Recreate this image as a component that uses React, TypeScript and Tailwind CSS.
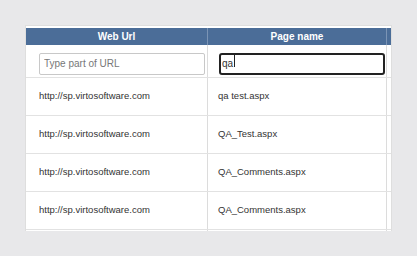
import React, { useState } from 'react';

const rows = [
  { url: 'http://sp.virtosoftware.com', page: 'qa test.aspx' },
  { url: 'http://sp.virtosoftware.com', page: 'QA_Test.aspx' },
  { url: 'http://sp.virtosoftware.com', page: 'QA_Comments.aspx' },
  { url: 'http://sp.virtosoftware.com', page: 'QA_Comments.aspx' },
];

export default function App() {
  const [urlFilter, setUrlFilter] = useState('');
  const [pageFilter, setPageFilter] = useState('qa');

  return (
    <div className="w-[417px] h-[256px] bg-[#e8e8ea] pt-[25px] pl-[25px] font-['Liberation_Sans',Arial,sans-serif] overflow-hidden">
      <div className="w-[367px] h-[206px] bg-white border-l border-r border-t border-[#dedede] pt-[2px] overflow-hidden">
        {/* Header */}
        <div className="flex h-[17px] bg-[#4b6d98] text-white text-[10px] font-bold">
          <div className="w-[182px] flex items-center justify-center border-r border-[#7b94b5]">Web Url</div>
          <div className="w-[179px] flex items-center justify-center border-r border-[#7b94b5]">Page name</div>
          <div className="flex-1" />
        </div>

        {/* Filters */}
        <div className="flex h-[33px] border-b border-[#e2e2e2]">
          <div className="w-[182px] pl-[13px] pt-[5px] border-r border-[#dcdcdc]">
            <input
              type="text"
              value={urlFilter}
              onChange={(e) => setUrlFilter(e.target.value)}
              placeholder="Type part of URL"
              className="w-[166px] h-[22px] px-[4px] text-[10px] text-[#333] placeholder-[#777] border border-[#c8c8c8] rounded-[2px] outline-none"
            />
          </div>
          <div className="w-[179px] pl-[11px] pt-[5px] border-r border-[#dcdcdc]">
            <div className="relative w-[166px] h-[22px]">
              <input
                type="text"
                value={pageFilter}
                onChange={(e) => setPageFilter(e.target.value)}
                className="w-full h-full px-[1px] text-[10px] text-[#333] caret-transparent border-2 border-[#222] rounded-[3px] outline-none"
              />
              {/* caret */}
              <span className="absolute left-[15px] top-[5px] w-[1px] h-[12px] bg-[#222]" />
            </div>
          </div>
          <div className="flex-1" />
        </div>

        {/* Rows */}
        {rows.map((r, i) => (
          <div key={i} className="flex h-[38px] border-b border-[#e2e2e2] text-[9.5px] text-[#333]">
            <div className="w-[182px] pl-[13px] flex items-center border-r border-[#dcdcdc]">{r.url}</div>
            <div className="w-[179px] pl-[10px] flex items-center border-r border-[#dcdcdc]">{r.page}</div>
            <div className="flex-1" />
          </div>
        ))}
        <div className="flex h-[38px]">
          <div className="w-[182px] border-r border-[#dcdcdc]" />
          <div className="w-[179px] border-r border-[#dcdcdc]" />
          <div className="flex-1" />
        </div>
      </div>
    </div>
  );
}
